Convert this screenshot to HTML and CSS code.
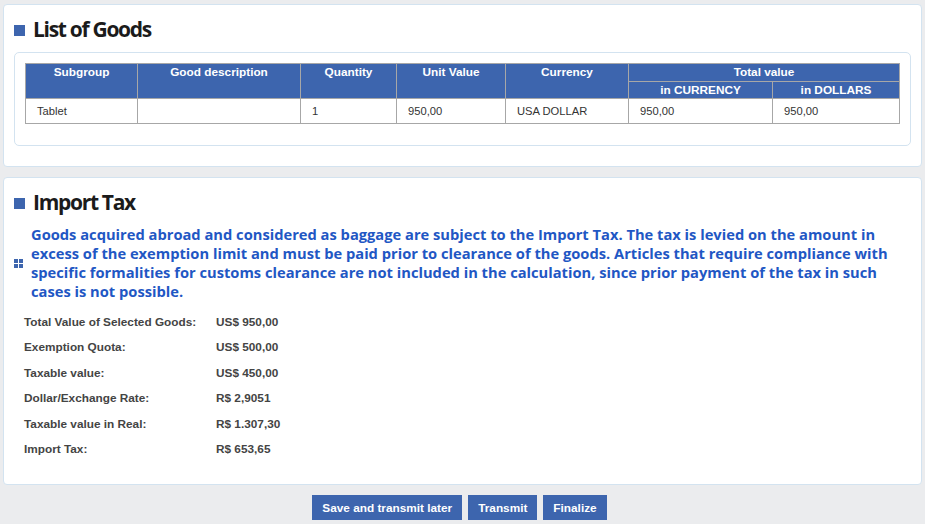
FILE: index.html
```html
<!DOCTYPE html>
<html lang="en">
<head>
  <meta charset="UTF-8" />
  <title>Import Tax</title>
  <link rel="stylesheet" href="styles.css">
</head>
<body>
  <div class="panel panel-goods">
    <h2 class="panel-title"><span class="bullet"></span>List of Goods</h2>
    <div class="box">
      <table class="goods">
        <colgroup>
          <col style="width: 112px">
          <col style="width: 163px">
          <col style="width: 96px">
          <col style="width: 109px">
          <col style="width: 123px">
          <col style="width: 144px">
          <col>
        </colgroup>
        <thead>
          <tr>
            <th rowspan="2">Subgroup</th>
            <th rowspan="2">Good description</th>
            <th rowspan="2">Quantity</th>
            <th rowspan="2">Unit Value</th>
            <th rowspan="2">Currency</th>
            <th colspan="2">Total value</th>
          </tr>
          <tr>
            <th>in CURRENCY</th>
            <th>in DOLLARS</th>
          </tr>
        </thead>
        <tbody>
          <tr>
            <td>Tablet</td>
            <td></td>
            <td>1</td>
            <td>950,00</td>
            <td>USA DOLLAR</td>
            <td>950,00</td>
            <td>950,00</td>
          </tr>
        </tbody>
      </table>
    </div>
  </div>

  <div class="panel panel-tax">
    <h2 class="panel-title"><span class="bullet"></span>Import Tax</h2>
    <div class="notice">
      <span class="grid-icon"><i></i><i></i><i></i><i></i></span>
      <p>Goods acquired abroad and considered as baggage are subject to the Import Tax. The tax is levied on the amount in excess of the exemption limit and must be paid prior to clearance of the goods. Articles that require compliance with specific formalities for customs clearance are not included in the calculation, since prior payment of the tax in such cases is not possible.</p>
    </div>
    <dl class="summary">
      <dt>Total Value of Selected Goods:</dt><dd>US$ 950,00</dd>
      <dt>Exemption Quota:</dt><dd>US$ 500,00</dd>
      <dt>Taxable value:</dt><dd>US$ 450,00</dd>
      <dt>Dollar/Exchange Rate:</dt><dd>R$ 2,9051</dd>
      <dt>Taxable value in Real:</dt><dd>R$ 1.307,30</dd>
      <dt>Import Tax:</dt><dd>R$ 653,65</dd>
    </dl>
  </div>

  <div class="actions">
    <button class="btn">Save and transmit later</button>
    <button class="btn">Transmit</button>
    <button class="btn">Finalize</button>
  </div>
</body>
</html>
```

FILE: styles.css
```css
body {
  margin: 0;
  padding: 4px 3px 0 3px;
  background-color: #ebecee;
  font-family: "Liberation Sans", Arial, sans-serif;
  font-size: 11.8px;
  color: #333;
}

.panel {
  background-color: #fff;
  border: 1px solid #d3e3f0;
  border-radius: 4px;
  margin-bottom: 10px;
}

.panel-goods {
  padding: 10px 10px 20px 10px;
}

.panel-tax {
  padding: 10px 10px 22px 10px;
}

.panel-title {
  display: flex;
  align-items: center;
  margin: 0;
  height: 27px;
  font-family: "Open Sans", sans-serif;
  font-size: 21px;
  font-weight: 700;
  letter-spacing: -1.3px;
  color: #1b1b1b;
}

.bullet {
  width: 11px;
  height: 11px;
  background-color: #3d65ae;
  margin-right: 8px;
  margin-top: 3px;
}

.box {
  margin-top: 10px;
  border: 1px solid #d3e3f0;
  border-radius: 5px;
  padding: 10px 10px 21px 10px;
}

.goods {
  width: 100%;
  border-collapse: collapse;
  table-layout: fixed;
}

.goods th {
  background-color: #3d65ae;
  color: #fff;
  font-weight: bold;
  vertical-align: top;
  border: 1px solid #a7a7a7;
  padding: 1px 4px 1px 4px;
  height: 15px;
  text-align: center;
  white-space: nowrap;
}

.goods thead tr:nth-child(2) th {
  height: 14px;
  padding-top: 1px;
}

.goods td {
  border: 1px solid #a7a7a7;
  height: 24px;
  padding: 0 11px;
  color: #333;
  font-size: 11.2px;
}

.notice {
  display: flex;
  align-items: center;
  margin-top: 10px;
}

.grid-icon {
  display: grid;
  grid-template-columns: 4px 4px;
  gap: 1px;
  margin-right: 8px;
  flex-shrink: 0;
}

.grid-icon i {
  width: 4px;
  height: 4px;
  background-color: #3d65ae;
}

.notice p {
  margin: 0;
  font-family: "Open Sans", sans-serif;
  font-weight: 700;
  font-size: 14.7px;
  line-height: 19px;
  color: #1f57c4;
}

.summary {
  display: grid;
  grid-template-columns: 192px 1fr;
  grid-auto-rows: 25.5px;
  margin: 8px 0 0 10px;
  font-weight: bold;
  color: #444;
  align-items: center;
}

.summary dt,
.summary dd {
  margin: 0;
}

.actions {
  display: flex;
  justify-content: center;
  gap: 6px;
  padding-right: 6px;
}

.btn {
  background-color: #3d65ae;
  color: #fff;
  border: none;
  font-family: "Liberation Sans", Arial, sans-serif;
  font-size: 11.8px;
  font-weight: bold;
  height: 25px;
  padding: 0 10px;
  cursor: pointer;
}
```
